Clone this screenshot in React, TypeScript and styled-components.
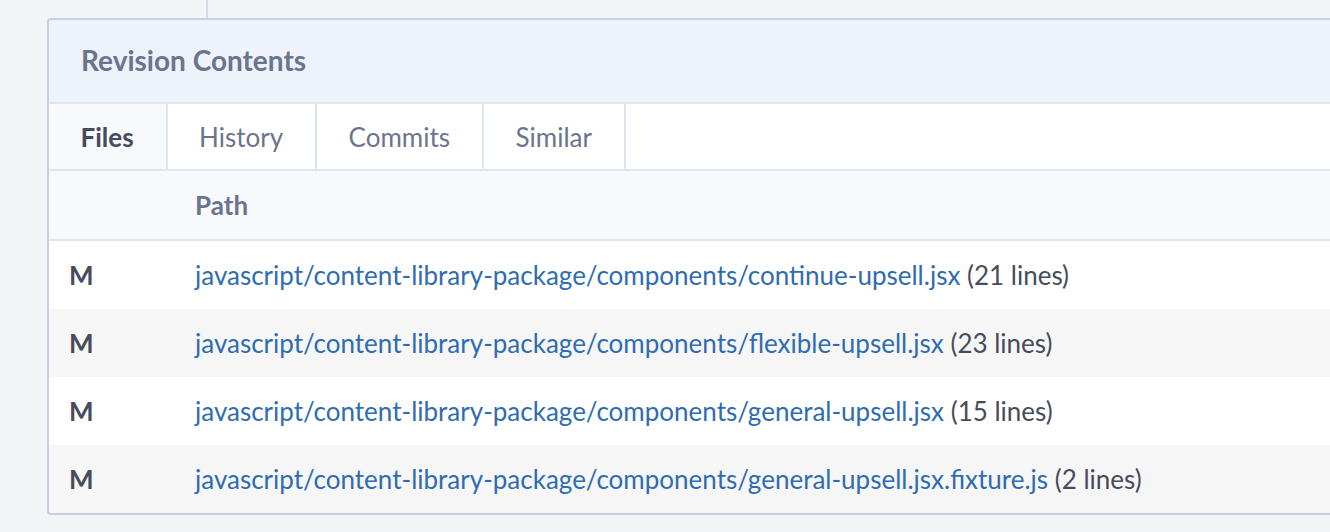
import * as React from 'react'
import styled, { createGlobalStyle } from 'styled-components'

const GlobalStyle = createGlobalStyle`
  html, body {
    margin: 0;
    padding: 0;
    background: #f3f4f6;
    font-family: Lato, "Noto Sans", sans-serif;
  }
`

const Page = styled.div`
  width: 1330px;
  height: 532px;
  overflow: hidden;
  padding-left: 47px;
  box-sizing: border-box;
`

const Rail = styled.div`
  width: 2px;
  height: 18px;
  margin-left: 159px;
  background: #d6dae3;
`

const Panel = styled.div`
  width: 1320px;
  background: #fff;
  border: 1px solid #c7d0dc;
  border-width: 2px 0 2px 2px;
  border-radius: 4px 0 0 4px;
  overflow: hidden;
`

const Header = styled.div`
  height: 84px;
  box-sizing: border-box;
  display: flex;
  align-items: center;
  padding: 0 0 3px 32px;
  background: #eef2fb;
  border-bottom: 2px solid #dde5ee;
  color: #6b748c;
  font-size: 28px;
  font-weight: 700;
`

const Tabs = styled.div`
  display: flex;
  height: 65px;
  border-bottom: 2px solid #dde5ee;
`

const Tab = styled.div<{ $active?: boolean }>`
  display: flex;
  align-items: center;
  justify-content: center;
  padding: 0 32px 0 31.5px;
  border-right: 2px solid #dde5ee;
  background: ${p => (p.$active ? '#f7f9fc' : '#fff')};
  color: ${p => (p.$active ? '#464c5c' : '#6b748c')};
  font-size: 26px;
  font-weight: ${p => (p.$active ? 700 : 400)};
`

const Table = styled.div`
  display: flex;
  flex-direction: column;
`

const Row = styled.div<{ $stripe?: boolean }>`
  display: grid;
  grid-template-columns: 126px 1fr;
  align-items: center;
  height: 68px;
  padding-left: 20px;
  background: ${p => (p.$stripe ? '#f6f6f7' : '#fff')};
  font-size: 26px;
  color: #464c5c;
`

const HeadRow = styled(Row)`
  background: #f7f9fc;
  border-bottom: 2px solid #dde5ee;
  color: #6b748c;
  font-weight: 700;
`

const Change = styled.div`
  font-weight: 700;
  color: #464c5c;
`

const Cell = styled.div`
  white-space: nowrap;
`

const PathLink = styled.a`
  color: #2f6cb0;
  text-decoration: none;
`

const files = [
  { path: 'javascript/content-library-package/components/continue-upsell.jsx', lines: 21 },
  { path: 'javascript/content-library-package/components/flexible-upsell.jsx', lines: 23 },
  { path: 'javascript/content-library-package/components/general-upsell.jsx', lines: 15 },
  { path: 'javascript/content-library-package/components/general-upsell.jsx.fixture.js', lines: 2 },
]

const tabs = ['Files', 'History', 'Commits', 'Similar']

const App = () => (
  <Page>
    <GlobalStyle />
    <Rail />
    <Panel>
      <Header>Revision Contents</Header>
      <Tabs>
        {tabs.map((t, i) => (
          <Tab key={t} $active={i === 0}>{t}</Tab>
        ))}
      </Tabs>
      <Table>
        <HeadRow>
          <div />
          <Cell>Path</Cell>
        </HeadRow>
        {files.map((f, i) => (
          <Row key={f.path} $stripe={i % 2 === 1}>
            <Change>M</Change>
            <Cell>
              <PathLink href="#">{f.path}</PathLink> ({f.lines} lines)
            </Cell>
          </Row>
        ))}
      </Table>
    </Panel>
  </Page>
)

export default App
